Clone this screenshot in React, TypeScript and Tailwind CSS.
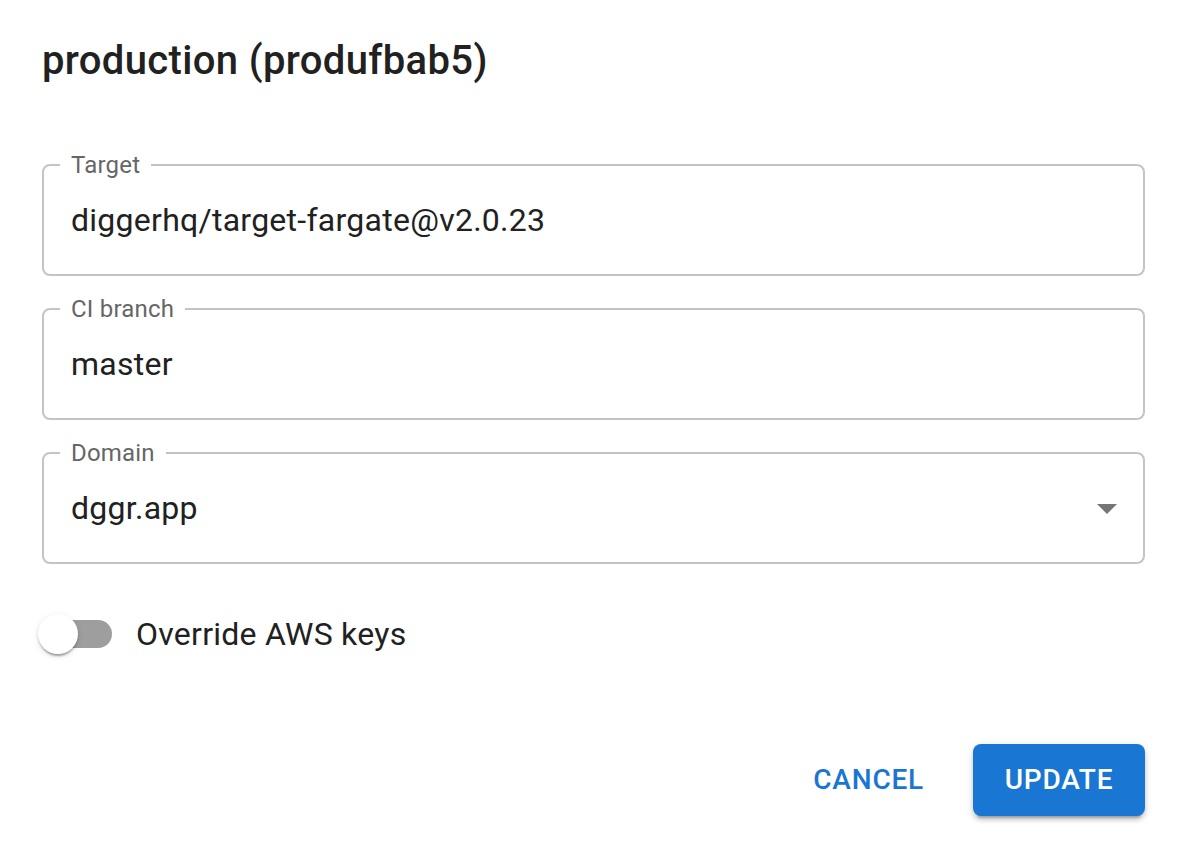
import React from "react";

function OutlinedField({
  label,
  value,
  select,
}: {
  label: string;
  value: string;
  select?: boolean;
}) {
  return (
    <fieldset className="m-0 min-w-0 rounded-[8px] border-2 border-[#c4c4c4] p-0">
      <legend className="ml-[16px] px-[11px] text-[24px] leading-[24px] tracking-[0.2px] text-[#666666]">
        {label}
      </legend>
      <div className="flex h-[97px] items-center justify-between pb-[11px] pl-[27px] pr-[12px]">
        <span className="text-[32px] leading-[40px] tracking-[0.26px] text-[#212121]">{value}</span>
        {select && (
          <svg width="48" height="48" viewBox="0 0 24 24" className="fill-[#757575]">
            <path d="M7 10l5 5 5-5z" />
          </svg>
        )}
      </div>
    </fieldset>
  );
}

function Toggle() {
  return (
    <div className="relative ml-[-4px] h-[40px] w-[74px] shrink-0">
      <div className="absolute left-[6px] top-[6px] h-[28px] w-[68px] rounded-full bg-[#9e9e9e]" />
      <div className="absolute left-0 top-0 h-[40px] w-[40px] rounded-full bg-white shadow-[0px_4px_2px_-2px_rgba(0,0,0,0.2),0px_2px_2px_0px_rgba(0,0,0,0.14),0px_2px_6px_0px_rgba(0,0,0,0.12)]" />
    </div>
  );
}

export default function App() {
  return (
    <div className="h-[846px] w-[1192px] overflow-hidden bg-white font-['Roboto',sans-serif] text-[#212121]">
      <div className="pl-[42px] pr-[47px]">
        <h2 className="pt-[29px] text-[40px] font-medium leading-[64px] tracking-[0.35px]">
          production (produfbab5)
        </h2>

        <div className="mt-[60px] flex flex-col gap-[21px]">
          <OutlinedField label="Target" value="diggerhq/target-fargate@v2.0.23" />
          <OutlinedField label="CI branch" value="master" />
          <OutlinedField label="Domain" value="dggr.app" select />
        </div>

        <div className="mt-[50px] flex h-[40px] items-center">
          <Toggle />
          <span className="ml-[24px] text-[32px] leading-[40px] tracking-[0.25px]">
            Override AWS keys
          </span>
        </div>

        <div className="mt-[90px] flex items-center justify-end gap-[33px]">
          <button className="h-[72px] px-[16px] text-[28px] font-medium uppercase tracking-[0.8px] text-[#1976d2]">
            Cancel
          </button>
          <button className="flex h-[72px] w-[172px] items-center justify-center rounded-[8px] bg-[#1976d2] text-[28px] font-medium uppercase tracking-[0.8px] text-white shadow-[0px_6px_2px_-4px_rgba(0,0,0,0.2),0px_4px_4px_0px_rgba(0,0,0,0.14),0px_2px_10px_0px_rgba(0,0,0,0.12)]">
            Update
          </button>
        </div>
      </div>
    </div>
  );
}
